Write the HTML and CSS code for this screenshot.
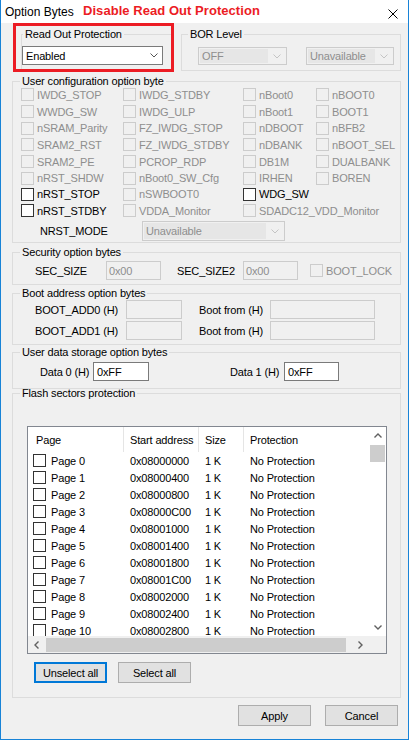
FILE: index.html
```html
<!DOCTYPE html>
<html lang="en">
  <head>
    <meta charset="UTF-8" />
    <title>Option Bytes</title>
    <link rel="stylesheet" href="styles.css">
  </head>
  <body>
    <div class="window">
      <div class="titlebar">
        <span class="title">Option Bytes</span>
        <span class="note">Disable Read Out Protection</span>
        <svg class="close" width="10" height="10" viewBox="0 0 10 10">
          <path d="M0.5 0.5 L9.5 9.5 M9.5 0.5 L0.5 9.5" stroke="#000" stroke-width="1" fill="none" />
        </svg>
      </div>

      <div class="content">
        <div class="top-row">
          <div class="highlight">
            <fieldset class="group rop">
              <legend>Read Out Protection</legend>
              <div class="select rop-select">
                <span class="value">Enabled</span>
                <span class="chev"><svg width="8" height="5" viewBox="0 0 8 5"><polyline points="0.5,0.5 4,4 7.5,0.5" fill="none" stroke="#555" /></svg></span>
              </div>
            </fieldset>
          </div>
          <fieldset class="group bor">
            <legend>BOR Level</legend>
            <div class="bor-row">
              <div class="select off bor-off">
                <span class="value">OFF</span>
                <span class="chev"><svg width="8" height="5" viewBox="0 0 8 5"><polyline points="0.5,0.5 4,4 7.5,0.5" fill="none" stroke="#c4c4c4" /></svg></span>
              </div>
              <div class="select off bor-level">
                <span class="value">Unavailable</span>
                <span class="chev"><svg width="8" height="5" viewBox="0 0 8 5"><polyline points="0.5,0.5 4,4 7.5,0.5" fill="none" stroke="#c4c4c4" /></svg></span>
              </div>
            </div>
          </fieldset>
        </div>

        <fieldset class="group user-config">
          <legend>User configuration option byte</legend>
          <div class="cb-grid">
            <label class="cb off"><span class="box"></span>IWDG_STOP</label>
            <label class="cb off"><span class="box"></span>IWDG_STDBY</label>
            <label class="cb off"><span class="box"></span>nBoot0</label>
            <label class="cb off"><span class="box"></span>nBOOT0</label>

            <label class="cb off"><span class="box"></span>WWDG_SW</label>
            <label class="cb off"><span class="box"></span>IWDG_ULP</label>
            <label class="cb off"><span class="box"></span>nBoot1</label>
            <label class="cb off"><span class="box"></span>BOOT1</label>

            <label class="cb off"><span class="box"></span>nSRAM_Parity</label>
            <label class="cb off"><span class="box"></span>FZ_IWDG_STOP</label>
            <label class="cb off"><span class="box"></span>nDBOOT</label>
            <label class="cb off"><span class="box"></span>nBFB2</label>

            <label class="cb off"><span class="box"></span>SRAM2_RST</label>
            <label class="cb off"><span class="box"></span>FZ_IWDG_STDBY</label>
            <label class="cb off"><span class="box"></span>nDBANK</label>
            <label class="cb off"><span class="box"></span>nBOOT_SEL</label>

            <label class="cb off"><span class="box"></span>SRAM2_PE</label>
            <label class="cb off"><span class="box"></span>PCROP_RDP</label>
            <label class="cb off"><span class="box"></span>DB1M</label>
            <label class="cb off"><span class="box"></span>DUALBANK</label>

            <label class="cb off"><span class="box"></span>nRST_SHDW</label>
            <label class="cb off"><span class="box"></span>nBoot0_SW_Cfg</label>
            <label class="cb off"><span class="box"></span>IRHEN</label>
            <label class="cb off"><span class="box"></span>BOREN</label>

            <label class="cb"><span class="box"></span>nRST_STOP</label>
            <label class="cb off"><span class="box"></span>nSWBOOT0</label>
            <label class="cb"><span class="box"></span>WDG_SW</label>
            <span></span>

            <label class="cb"><span class="box"></span>nRST_STDBY</label>
            <label class="cb off"><span class="box"></span>VDDA_Monitor</label>
            <label class="cb off"><span class="box"></span>SDADC12_VDD_Monitor</label>
            <span></span>
          </div>
          <div class="nrst-row">
            <span class="nrst-label">NRST_MODE</span>
            <div class="select off nrst-select">
              <span class="value">Unavailable</span>
              <span class="chev"><svg width="8" height="5" viewBox="0 0 8 5"><polyline points="0.5,0.5 4,4 7.5,0.5" fill="none" stroke="#c4c4c4" /></svg></span>
            </div>
          </div>
        </fieldset>

        <fieldset class="group security">
          <legend>Security option bytes</legend>
          <div class="row">
            <span class="lbl w71">SEC_SIZE</span>
            <div class="field off w55">0x00</div>
            <span class="lbl w66 ml16">SEC_SIZE2</span>
            <div class="field off w55">0x00</div>
            <label class="cb off ml12"><span class="box"></span>BOOT_LOCK</label>
          </div>
        </fieldset>

        <fieldset class="group boot">
          <legend>Boot address option bytes</legend>
          <div class="row">
            <span class="lbl w91">BOOT_ADD0 (H)</span>
            <div class="field off w56"></div>
            <span class="lbl w71 ml17">Boot from (H)</span>
            <div class="field off w105"></div>
          </div>
          <div class="row second">
            <span class="lbl w91">BOOT_ADD1 (H)</span>
            <div class="field off w56"></div>
            <span class="lbl w71 ml17">Boot from (H)</span>
            <div class="field off w105"></div>
          </div>
        </fieldset>

        <fieldset class="group user-data">
          <legend>User data storage option bytes</legend>
          <div class="row data-row">
            <span class="lbl w53">Data 0 (H)</span>
            <div class="field w56">0xFF</div>
            <span class="lbl w54 ml81">Data 1 (H)</span>
            <div class="field w55">0xFF</div>
          </div>
        </fieldset>

        <fieldset class="group flash">
          <legend>Flash sectors protection</legend>
          <div class="listview">
            <div class="lv-body">
              <div class="lv-head">
                <span>Page</span>
                <span>Start address</span>
                <span>Size</span>
                <span>Protection</span>
              </div>
              <div id="rows"></div>
            </div>
            <div class="vscroll">
              <span class="arrow"><svg width="8" height="5" viewBox="0 0 8 5"><polyline points="0.5,4.5 4,1 7.5,4.5" fill="none" stroke="#606060" stroke-width="1.4" /></svg></span>
              <span class="vthumb"></span>
              <span class="arrow down"><svg width="8" height="5" viewBox="0 0 8 5"><polyline points="0.5,0.5 4,4 7.5,0.5" fill="none" stroke="#606060" stroke-width="1.4" /></svg></span>
            </div>
            <div class="hscroll">
              <span class="arrow"><svg width="5" height="8" viewBox="0 0 5 8"><polyline points="4.5,0.5 1,4 4.5,7.5" fill="none" stroke="#606060" stroke-width="1.4" /></svg></span>
              <span class="hthumb"></span>
              <span class="arrow right"><svg width="5" height="8" viewBox="0 0 5 8"><polyline points="0.5,0.5 4,4 0.5,7.5" fill="none" stroke="#606060" stroke-width="1.4" /></svg></span>
            </div>
            <div class="corner"></div>
          </div>
          <div class="list-buttons">
            <button class="btn focus">Unselect all</button>
            <button class="btn">Select all</button>
          </div>
        </fieldset>

        <div class="footer">
          <button class="btn">Apply</button>
          <button class="btn">Cancel</button>
        </div>
      </div>
    </div>

    <script>
      // fill the flash page list: 1 K pages from 0x08000000
      const rows = document.getElementById("rows");
      for (let i = 0; i < 11; i++) {
        const hex = (0x08000000 + i * 0x400).toString(16).toUpperCase().padStart(8, "0");
        rows.innerHTML += `
          <div class="lv-row">
            <span class="page"><span class="box"></span>Page ${i}</span>
            <span>0x${hex}</span>
            <span>1 K</span>
            <span>No Protection</span>
          </div>`;
      }
    </script>
  </body>
</html>
```

FILE: styles.css
```css
* {
  box-sizing: border-box;
}
body {
  margin: 0;
  background: #fff;
  font-family: "Liberation Sans", Arial, sans-serif;
  font-size: 11px;
  color: #000;
}
.window {
  width: 409px;
  height: 740px;
  border: 1px solid #1883d7;
  border-top: 0;
  background: #f0f0f0;
  letter-spacing: -0.15px;
  overflow: hidden;
}
.titlebar {
  height: 23px;
  background: #fff;
  display: flex;
  align-items: flex-start;
  padding: 0 10px 0 4px;
}
.title {
  width: 78px;
  font-size: 12px;
  line-height: 14px;
  margin-top: 5px;
  letter-spacing: 0;
}
.note {
  color: #ec1c24;
  font-weight: bold;
  font-size: 13px;
  line-height: 15px;
  margin-top: 3px;
  letter-spacing: 0.05px;
}
.close {
  margin-left: auto;
  margin-top: 9px;
}
.content {
  padding: 0 7px 0 11px;
}

/* group boxes */
.group {
  margin: 0;
  padding: 0;
  border: 1px solid #dcdcdc;
  min-width: 0;
}
.group legend {
  padding: 0 2px;
  margin-left: 7px;
  font-size: 11px;
  line-height: 12px;
}
.top-row {
  display: flex;
  align-items: flex-start;
}
.highlight {
  margin-left: 1px;
  width: 161px;
  height: 49px;
  border: 3px solid #ec1c24;
  overflow: hidden;
}
.rop {
  width: 160px;
  height: 60px;
  margin: 2px 0 0 5px;
  padding-top: 6px;
}
.rop legend {
  margin-left: 1px;
}
.bor {
  width: 220px;
  margin: 5px 0 0 7px;
  padding: 7px 0 5px 0;
}
.bor legend {
  margin-left: 6px;
}
.bor-row {
  display: flex;
  gap: 19px;
  padding-left: 16px;
}

/* combo boxes */
.select {
  display: flex;
  align-items: center;
  border: 1px solid #7a7a7a;
  background: #fff;
  height: 19px;
  padding-left: 3px;
}
.select .value {
  flex: 1;
}
.select .chev {
  width: 17px;
  display: flex;
  justify-content: center;
  align-items: center;
}
.select.off {
  border-color: #cccccc;
  background: #f0f0f0;
  padding: 1px;
  color: #8e8e8e;
}
.select.off .value {
  height: 100%;
  background: #e6e6e6;
  padding-left: 2px;
  display: flex;
  align-items: center;
}
.rop-select {
  width: 141px;
}
.bor-off {
  width: 89px;
  height: 18px;
}
.bor-level {
  width: 88px;
  height: 18px;
}

/* check boxes */
.cb {
  display: flex;
  align-items: center;
  gap: 3px;
  white-space: nowrap;
}
.box {
  width: 13px;
  height: 13px;
  border: 1px solid #333;
  background: #fff;
  flex-shrink: 0;
}
.cb.off {
  color: #8e8e8e;
}
.cb.off .box {
  border-color: #cccccc;
  background: #f0f0f0;
}
.user-config {
  margin-top: 3px;
  padding: 0 0 1px 0;
}
.cb-grid {
  display: grid;
  grid-template-columns: 102px 120px 73px 1fr;
  grid-template-rows: 17px 17px 16px 17px 17px 16px 16px 17px;
  margin-top: -1px;
  padding-left: 8px;
}
.nrst-row {
  display: flex;
  align-items: center;
  height: 20px;
  margin-top: 2px;
  padding-left: 27px;
}
.nrst-label {
  width: 102px;
}
.nrst-select {
  width: 143px;
  height: 20px;
}

/* label + text box rows */
.row {
  display: flex;
  align-items: center;
  height: 19px;
  padding-left: 22px;
}
.row.second {
  margin-top: 2px;
}
.lbl {
  flex-shrink: 0;
}
.field {
  height: 19px;
  border: 1px solid #7a7a7a;
  background: #fff;
  padding-left: 3px;
  display: flex;
  align-items: center;
}
.field.off {
  border-color: #cccccc;
  background: #f0f0f0;
  color: #8e8e8e;
  padding-left: 2px;
}
.w53 { width: 53px; }
.w54 { width: 54px; }
.w55 { width: 55px; }
.w56 { width: 56px; }
.w66 { width: 66px; }
.w71 { width: 71px; }
.w91 { width: 91px; }
.w105 { width: 105px; }
.ml12 { margin-left: 12px; }
.ml16 { margin-left: 16px; }
.ml17 { margin-left: 17px; }
.ml81 { margin-left: 81px; }

.security {
  margin-top: 3px;
  padding: 3px 0 4px 0;
}
.boot {
  margin-top: 2px;
  padding: 1px 0 4px 0;
}
.user-data {
  margin-top: 1px;
  padding: 4px 0 7px 0;
}
.data-row {
  padding-left: 27px;
}
.flash {
  margin-top: -2px;
  padding: 27px 0 14px 0;
}

/* list view */
.listview {
  width: 360px;
  height: 228px;
  margin-left: 14px;
  border: 1px solid #828790;
  background: #fff;
  display: grid;
  grid-template-columns: 1fr 17px;
  grid-template-rows: 1fr 17px;
}
.lv-body {
  overflow: hidden;
}
.lv-head,
.lv-row {
  display: grid;
  grid-template-columns: 96px 75px 45px 1fr;
  white-space: nowrap;
}
.lv-head {
  height: 25px;
}
.lv-head span {
  display: flex;
  align-items: center;
  padding-left: 6px;
  border-right: 1px solid #e5e5e5;
}
.lv-head span:first-child {
  padding-left: 8px;
}
.lv-head span:last-child {
  border-right: 0;
}
.lv-row {
  height: 17px;
  line-height: 12px;
  align-items: center;
}
.lv-row span {
  padding-left: 6px;
}
.lv-row .page {
  display: flex;
  align-items: center;
  gap: 5px;
  padding-left: 5px;
}
.vscroll {
  display: flex;
  flex-direction: column;
  background: #fff;
}
.hscroll {
  display: flex;
  align-items: center;
  background: #f0f0f0;
}
.arrow {
  width: 17px;
  height: 17px;
  display: flex;
  align-items: center;
  justify-content: center;
  flex-shrink: 0;
}
.arrow.down {
  margin-top: auto;
}
.arrow.right {
  margin-left: auto;
}
.vthumb {
  height: 17px;
  margin: 1px 1px 0 1px;
  background: #cdcdcd;
}
.hthumb {
  width: 300px;
  height: 14px;
  margin-left: 1px;
  background: #cdcdcd;
}
.corner {
  background: #f0f0f0;
}

/* buttons */
.list-buttons {
  display: flex;
  gap: 11px;
  margin-top: 8px;
  padding-left: 21px;
}
.btn {
  width: 73px;
  height: 21px;
  padding: 0;
  border: 1px solid #adadad;
  background: #e1e1e1;
  font-family: inherit;
  font-size: 11px;
  letter-spacing: -0.15px;
  color: #000;
}
.btn.focus {
  border: 2px solid #0078d7;
}
.footer {
  display: flex;
  justify-content: flex-end;
  gap: 14px;
  margin-top: 7px;
  padding-right: 3px;
}
```
